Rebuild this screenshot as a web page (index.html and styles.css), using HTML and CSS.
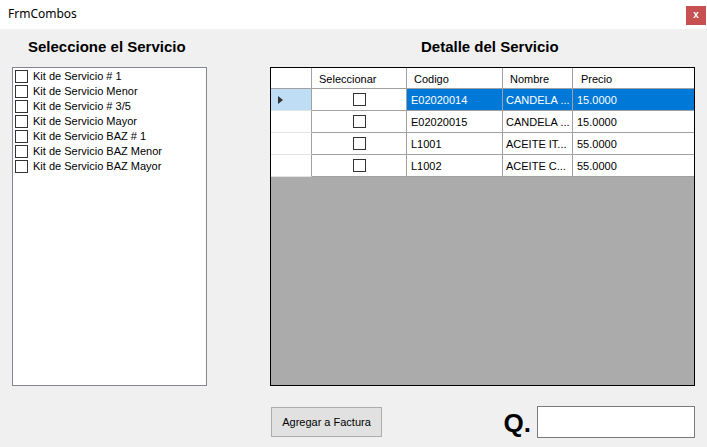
FILE: index.html
```html
<!DOCTYPE html>
<html>
<head>
<meta charset="utf-8">
<link rel="stylesheet" href="styles.css">
</head>
<body>
<div class="window">
  <div class="titlebar">
    <span class="title">FrmCombos</span>
    <span class="close">x</span>
  </div>
  <div class="content">
    <h2 class="heading heading-left">Seleccione el Servicio</h2>
    <h2 class="heading heading-right">Detalle del Servicio</h2>
    <div class="listbox">
      <div class="item"><span class="chk"></span><span>Kit de Servicio # 1</span></div>
      <div class="item"><span class="chk"></span><span>Kit de Servicio Menor</span></div>
      <div class="item"><span class="chk"></span><span>Kit de Servicio # 3/5</span></div>
      <div class="item"><span class="chk"></span><span>Kit de Servicio Mayor</span></div>
      <div class="item"><span class="chk"></span><span>Kit de Servicio BAZ # 1</span></div>
      <div class="item"><span class="chk"></span><span>Kit de Servicio BAZ Menor</span></div>
      <div class="item"><span class="chk"></span><span>Kit de Servicio BAZ Mayor</span></div>
    </div>
    <div class="grid">
      <div class="row head">
        <div class="cell c-rh"></div>
        <div class="cell c-sel">Seleccionar</div>
        <div class="cell c-cod">Codigo</div>
        <div class="cell c-nom">Nombre</div>
        <div class="cell c-pre">Precio</div>
      </div>
      <div class="row data selected">
        <div class="cell c-rh"><span class="arrow"></span></div>
        <div class="cell c-sel"><span class="gchk"></span></div>
        <div class="cell c-cod">E02020014</div>
        <div class="cell c-nom">CANDELA ...</div>
        <div class="cell c-pre">15.0000</div>
      </div>
      <div class="row data">
        <div class="cell c-rh"></div>
        <div class="cell c-sel"><span class="gchk"></span></div>
        <div class="cell c-cod">E02020015</div>
        <div class="cell c-nom">CANDELA ...</div>
        <div class="cell c-pre">15.0000</div>
      </div>
      <div class="row data">
        <div class="cell c-rh"></div>
        <div class="cell c-sel"><span class="gchk"></span></div>
        <div class="cell c-cod">L1001</div>
        <div class="cell c-nom">ACEITE IT...</div>
        <div class="cell c-pre">55.0000</div>
      </div>
      <div class="row data">
        <div class="cell c-rh"></div>
        <div class="cell c-sel"><span class="gchk"></span></div>
        <div class="cell c-cod">L1002</div>
        <div class="cell c-nom">ACEITE C...</div>
        <div class="cell c-pre">55.0000</div>
      </div>
      <div class="empty"></div>
    </div>
    <div class="bottom">
      <button class="btn">Agregar a Factura</button>
      <div class="total">
        <span class="q">Q.</span>
        <div class="textbox"></div>
      </div>
    </div>
  </div>
</div>
</body>
</html>
```

FILE: styles.css
```css
* { box-sizing: border-box; }
html, body {
  margin: 0;
  padding: 0;
  width: 707px;
  height: 447px;
  overflow: hidden;
  background: #f0f0f0;
  font-family: "Liberation Sans", Arial, sans-serif;
  font-size: 11px;
  color: #000;
}
.window { width: 707px; height: 447px; display: flex; flex-direction: column; }
.titlebar {
  height: 29px;
  background: #fff;
  display: flex;
  justify-content: space-between;
  align-items: flex-start;
}
.title {
  font-family: "Noto Sans", "Open Sans", sans-serif;
  font-size: 12px;
  line-height: 16px;
  margin: 6px 0 0 8px;
}
.close {
  width: 20px;
  height: 19px;
  margin: 6px 1px 0 0;
  background: #c75050;
  color: #fff;
  font-weight: bold;
  font-size: 10px;
  line-height: 18px;
  text-align: center;
}
.content {
  display: grid;
  grid-template-columns: 195px 425px;
  grid-template-rows: 29px 319px auto;
  column-gap: 63px;
  padding: 9px 0 0 12px;
}
.heading {
  margin: 0;
  font-size: 15px;
  line-height: 17px;
  font-weight: bold;
}
.heading-left { padding-left: 16px; }
.heading-right { padding-left: 151px; }
.listbox {
  background: #fff;
  border: 1px solid #828790;
  padding: 1px 0 0 2px;
}
.item {
  height: 15px;
  display: flex;
  align-items: center;
  gap: 5px;
  line-height: 13px;
  white-space: nowrap;
}
.chk {
  width: 13px;
  height: 13px;
  border: 1px solid #333;
  background: #fff;
  flex: none;
}
.grid {
  border: 1px solid #000;
  background: #ababab;
  display: flex;
  flex-direction: column;
}
.row { display: flex; background: #fff; }
.head { height: 21px; }
.data { height: 22px; }
.cell {
  border-right: 1px solid #a0a0a0;
  border-bottom: 1px solid #a0a0a0;
  display: flex;
  align-items: center;
  padding-left: 4px;
  white-space: nowrap;
  overflow: hidden;
}
.head .cell { padding-left: 7px; padding-top: 1px; }
.c-rh { width: 41px; }
.c-sel { width: 95px; }
.c-cod { width: 96px; }
.c-nom { width: 70px; padding-left: 3px; }
.c-pre { width: 121px; border-right: none; }
.head .c-pre { padding-left: 8px; }
.data .c-rh { border-bottom-color: #e3e3e3; padding-left: 7px; }
.data .c-sel { justify-content: center; padding-left: 1px; }
.selected .c-rh { background: #bfddf5; }
.selected .c-cod, .selected .c-nom, .selected .c-pre {
  background: #0078d7;
  color: #fff;
}
.arrow {
  width: 0;
  height: 0;
  border-top: 4px solid transparent;
  border-bottom: 4px solid transparent;
  border-left: 5px solid #333;
}
.gchk {
  width: 13px;
  height: 13px;
  border: 1px solid #333;
  background: #fff;
}
.empty { flex: 1; }
.bottom {
  grid-column: 2;
  display: flex;
  justify-content: space-between;
  align-items: flex-start;
  padding-top: 20px;
}
.btn {
  margin: 1px 0 0 1px;
  width: 111px;
  height: 30px;
  background: #e1e1e1;
  border: 1px solid #adadad;
  font-family: "Liberation Sans", Arial, sans-serif;
  font-size: 11px;
  color: #000;
  padding: 0;
}
.total { display: flex; align-items: flex-start; gap: 6px; }
.q {
  font-size: 26px;
  font-weight: bold;
  line-height: 30px;
  margin-top: 2px;
}
.textbox {
  width: 158px;
  height: 32px;
  background: #fff;
  border: 1px solid #7a7a7a;
}
```
